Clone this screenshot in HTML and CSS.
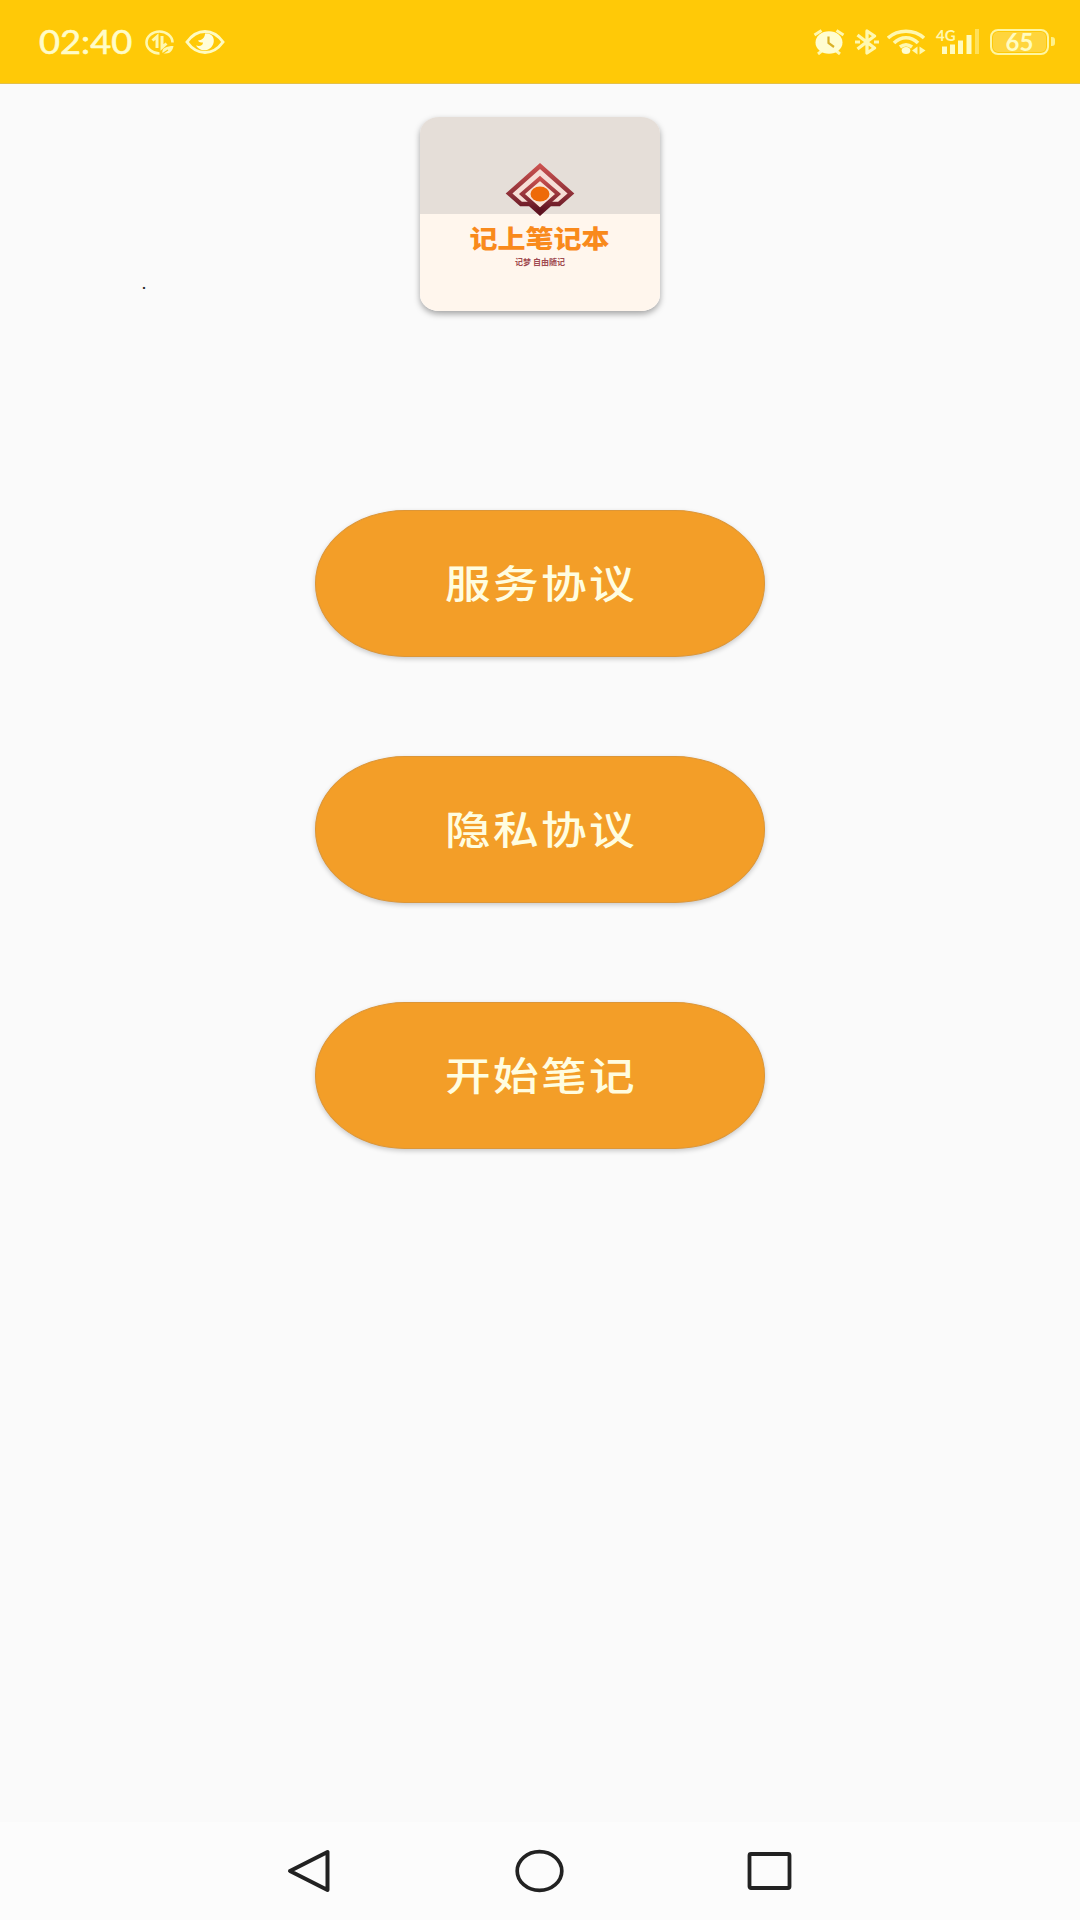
FILE: index.html
```html
<!DOCTYPE html>
<html lang="zh-CN">

<head>
    <meta charset="UTF-8">
    <meta name="viewport" content="width=device-width, initial-scale=1.0">
    <title>记上笔记本</title>
    <link rel="stylesheet" href="styles.css">
</head>

<body>
    <header class="status-bar">
        <div class="status-left">
            <span class="time">02:40</span>
            <svg class="icon-data" width="31" height="28" viewBox="0 0 31 28">
                <path d="M28.500 14.500A13 11 0 1 0 15.500 25.500" fill="none" stroke="#fff8b0" stroke-width="2.600" />
                <path d="M8.500 12.500l4.500-4v11.500M18 8v11.500l4.500-4" fill="none" stroke="#fff8b0" stroke-width="3" />
                <path d="M18.500 25c-1-5 4-7 11-7-1 5-4 9-11 7z" fill="#fff8b0" />
                <path d="M18 26l6-4" stroke="#ffc907" stroke-width="1.200" />
            </svg>
            <svg class="icon-eye" width="40" height="26" viewBox="0 0 40 26">
                <path d="M2 13C12-1 28-1 38 13 28 27 12 27 2 13z" fill="none" stroke="#fffbc0" stroke-width="3" />
                <path d="M20 4.500c9-1 10 7 8 11-3 7-13 8-17 1 4 1 7 0 7-3-2 0-4 0-5-2 4 0 7-3 7-7z" fill="#fffdd8" />
            </svg>
        </div>
        <div class="status-right">
            <svg class="icon-alarm" width="32" height="26" viewBox="0 0 32 26">
                <path d="M1.500 6l7-4.500M30.500 6l-7-4.500M5 25l5-4M27 25l-5-4" stroke="#fff8b0" stroke-width="3" />
                <ellipse cx="16" cy="13.500" rx="13.500" ry="11.300" fill="#fffdd0" />
                <path d="M15.500 7.500v6.500l5.500 4" fill="none" stroke="#d9b127" stroke-width="2.200" />
            </svg>
            <svg class="icon-bluetooth" width="24" height="26" viewBox="0 0 24 26">
                <path d="M2.500 6l17 13-7.500 5V2l7.500 5L2.500 20" fill="none" stroke="#fff8b0" stroke-width="3.300" stroke-linejoin="round" />
                <path d="M0 13h5M19 13h5" stroke="#fff8b0" stroke-width="3" />
            </svg>
            <svg class="icon-wifi" width="39" height="26" viewBox="0 0 39 26">
                <path d="M1 9C11 0 27 0 37 9M7 14c7-7 17-7 24 0M13 18c4-3 8-3 12 0" fill="none" stroke="#fff8b0" stroke-width="3.600" />
                <ellipse cx="19" cy="21.500" rx="4.300" ry="3.500" fill="#fffdd0" />
                <path d="M30.500 17.500v8l-5.500-4zM32.500 17.500v8l6-4z" fill="#fff8b0" />
            </svg>
            <div class="signal">
                <span class="network">4G</span>
                <svg width="38" height="26" viewBox="0 0 38 26">
                    <path d="M2.500 17.500v7.500M10.500 15.500v9.500M18.500 11.500v13.500M27 6v19" stroke="#fffbc0" stroke-width="5" />
                    <path d="M35 0v25" stroke="#ffe05a" stroke-width="4" />
                </svg>
            </div>
            <div class="battery">65</div>
            <div class="battery-tip"></div>
        </div>
    </header>

    <main>
        <div class="top">
            <span class="dot">.</span>
            <div class="card">
                <svg class="logo" width="70" height="54" viewBox="0 0 70 54">
                    <defs>
                        <linearGradient id="red" x1="0" y1="0" x2="0" y2="1">
                            <stop offset="0" stop-color="#c9504e" />
                            <stop offset="0.600" stop-color="#8e3038" />
                            <stop offset="1" stop-color="#5c1220" />
                        </linearGradient>
                    </defs>
                    <!-- outer frame -->
                    <path d="M35 3L66 30.500 54 41H45L35 50 25 41H16L4 30.500z" fill="#f6ded6" stroke="url(#red)" stroke-width="4.400" />
                    <!-- inner frame -->
                    <path d="M20 37l-5-6 20-16 20 16-5 6" fill="none" stroke="#f6ded6" stroke-width="3" />
                    <path d="M35 15.500L53 31 35 47 17 31z" fill="#f9e3d6" stroke="url(#red)" stroke-width="4" />
                    <ellipse cx="35" cy="31" rx="9.500" ry="7.500" fill="#ee6a08" />
                </svg>
                <div class="name">记上笔记本</div>
                <div class="slogan">记梦 自由随记</div>
            </div>
        </div>
        <div class="buttons">
            <button class="btn"><span>服务协议</span></button>
            <button class="btn"><span>隐私协议</span></button>
            <button class="btn"><span>开始笔记</span></button>
        </div>
    </main>

    <nav class="nav-bar">
        <svg width="44" height="46" viewBox="0 0 44 46">
            <path d="M3 23L40.500 4V42z" fill="none" stroke="#222" stroke-width="4" stroke-linejoin="round" />
        </svg>
        <svg width="50" height="46" viewBox="0 0 50 46">
            <ellipse cx="25.500" cy="23" rx="22.300" ry="19.300" fill="none" stroke="#222" stroke-width="3.700" />
        </svg>
        <svg width="46" height="46" viewBox="0 0 46 46">
            <rect x="2.500" y="6" width="40" height="34" rx="1.500" fill="none" stroke="#222" stroke-width="3.800" />
        </svg>
    </nav>
</body>

</html>
```
FILE: styles.css
```css
body {
    margin: 0;
    height: 1920px;
    display: flex;
    flex-direction: column;
    background-color: #fafafa;
    font-family: Roboto, "Noto Sans CJK SC", sans-serif;
    overflow: hidden;
}

.status-bar {
    box-sizing: border-box;
    height: 84px;
    padding: 0 25px 0 39px;
    display: flex;
    justify-content: space-between;
    align-items: center;
    background-color: #ffc907;
    border-bottom: 1px solid #e3c04a;
}

.status-left,
.status-right {
    display: flex;
    align-items: center;
}

.time {
    width: 105px;
    font-family: Lato, sans-serif;
    font-size: 33px;
    line-height: 38px;
    padding-bottom: 2px;
    color: #fffcc8;
    -webkit-text-stroke: 0.6px #fffcc8;
    transform: scaleX(1.1);
    transform-origin: left;
}

.icon-eye {
    margin-left: 10px;
}

.icon-bluetooth {
    margin-left: 10px;
}

.icon-wifi {
    margin-left: 8px;
}

.signal {
    position: relative;
    height: 26px;
    margin-left: 16px;
}

.network {
    position: absolute;
    left: -6px;
    top: 0;
    font-family: Lato, sans-serif;
    font-size: 15px;
    line-height: 13px;
    font-weight: bold;
    color: #fff8b0;
}

.battery {
    box-sizing: border-box;
    width: 59px;
    height: 26px;
    margin-left: 10px;
    border: 2px solid #fff6a0;
    border-radius: 8px;
    background-color: #ffd53d;
    box-shadow: inset 0 0 0 1px #ffc907;
    color: #fffcc0;
    font-family: Lato, sans-serif;
    font-size: 24px;
    font-weight: bold;
    line-height: 21px;
    text-align: center;
}

.battery-tip {
    width: 4px;
    height: 9px;
    margin-left: 2px;
    border-radius: 0 3px 3px 0;
    background-color: #fff18a;
}

main {
    flex: 1;
}

.top {
    display: grid;
    grid-template-columns: 420px 240px 420px;
    padding-top: 33px;
}

.dot {
    padding: 158px 0 0 142px;
    font-size: 14px;
    line-height: 18px;
    font-weight: bold;
    color: #222;
}

.card {
    height: 194px;
    display: flex;
    flex-direction: column;
    align-items: center;
    border-radius: 19px / 16px;
    background: linear-gradient(#e5ded8 97px, #fff6ed 97px);
    box-shadow: 0 3px 6px rgba(0, 0, 0, 0.35);
}

.logo {
    margin-top: 46px;
}

.name {
    margin-top: 9px;
    font-size: 25px;
    line-height: 28px;
    font-weight: 900;
    color: #f98a1c;
    transform: scaleX(1.12);
}

.slogan {
    margin-top: 4px;
    font-size: 8px;
    line-height: 10px;
    font-weight: bold;
    color: #a04a50;
    white-space: nowrap;
}

.buttons {
    display: flex;
    flex-direction: column;
    align-items: center;
    gap: 99px;
    margin-top: 199px;
}

.btn {
    width: 450px;
    height: 147px;
    padding: 0 0 6px;
    border: 1px solid #dc9638;
    border-radius: 90px / 73px;
    background-color: #f39e28;
    box-shadow: 0 2px 5px rgba(0, 0, 0, 0.2);
    font-family: "Noto Sans CJK SC", sans-serif;
    font-size: 39px;
    font-weight: 500;
    color: #fffde0;
}

/* wide glyphs */
.btn span {
    display: inline-block;
    letter-spacing: 2px;
    margin-right: -2px;
    transform: scaleX(1.17);
}

.nav-bar {
    box-sizing: border-box;
    height: 98px;
    padding: 0 287px;
    display: flex;
    justify-content: space-between;
    align-items: center;
    background-color: #fcfcfc;
}
```
